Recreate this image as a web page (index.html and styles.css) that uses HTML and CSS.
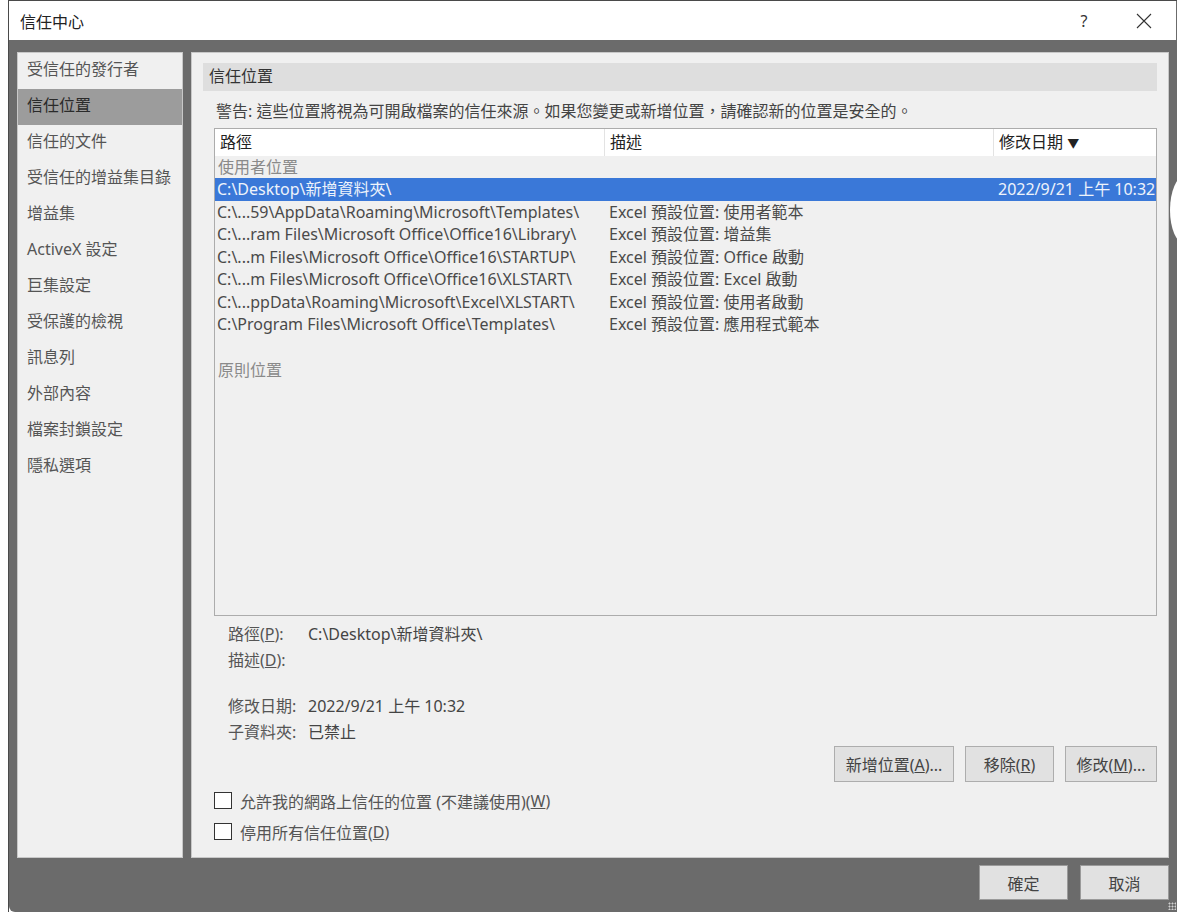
FILE: index.html
```html
<!DOCTYPE html>
<html lang="zh-Hant">
<head>
  <meta charset="UTF-8">
  <meta name="viewport" content="width=device-width, initial-scale=1.0">
  <title>信任中心</title>
  <link rel="stylesheet" href="styles.css">
</head>
<body>
  <div class="window">
    <div class="titlebar">
      <div class="title">信任中心</div>
      <div class="help">?</div>
      <div class="close">
        <svg width="16" height="16" viewBox="0 0 16 16"><path d="M1 1 L15 15 M15 1 L1 15" stroke="#333" stroke-width="1.1" fill="none"/></svg>
      </div>
    </div>

    <div class="frame">
      <div class="main">
        <ul class="nav">
          <li>受信任的發行者</li>
          <li class="active">信任位置</li>
          <li>信任的文件</li>
          <li>受信任的增益集目錄</li>
          <li>增益集</li>
          <li>ActiveX 設定</li>
          <li>巨集設定</li>
          <li>受保護的檢視</li>
          <li>訊息列</li>
          <li>外部內容</li>
          <li>檔案封鎖設定</li>
          <li>隱私選項</li>
        </ul>

        <div class="content">
          <div class="section-title">信任位置</div>
          <div class="warning">警告: 這些位置將視為可開啟檔案的信任來源。如果您變更或新增位置，請確認新的位置是安全的。</div>

          <div class="list">
            <div class="list-head">
              <div class="col col-path">路徑</div>
              <div class="col col-desc">描述</div>
              <div class="col col-date">修改日期 <span class="sort">&#9660;</span></div>
            </div>
            <div class="group">使用者位置</div>
            <div class="row selected">
              <div class="cell-path">C:\Desktop\新增資料夾\</div>
              <div class="cell-desc"></div>
              <div class="cell-date">2022/9/21 上午 10:32</div>
            </div>
            <div class="row">
              <div class="cell-path">C:\...59\AppData\Roaming\Microsoft\Templates\</div>
              <div class="cell-desc">Excel 預設位置: 使用者範本</div>
              <div class="cell-date"></div>
            </div>
            <div class="row">
              <div class="cell-path">C:\...ram Files\Microsoft Office\Office16\Library\</div>
              <div class="cell-desc">Excel 預設位置: 增益集</div>
              <div class="cell-date"></div>
            </div>
            <div class="row">
              <div class="cell-path">C:\...m Files\Microsoft Office\Office16\STARTUP\</div>
              <div class="cell-desc">Excel 預設位置: Office 啟動</div>
              <div class="cell-date"></div>
            </div>
            <div class="row">
              <div class="cell-path">C:\...m Files\Microsoft Office\Office16\XLSTART\</div>
              <div class="cell-desc">Excel 預設位置: Excel 啟動</div>
              <div class="cell-date"></div>
            </div>
            <div class="row">
              <div class="cell-path">C:\...ppData\Roaming\Microsoft\Excel\XLSTART\</div>
              <div class="cell-desc">Excel 預設位置: 使用者啟動</div>
              <div class="cell-date"></div>
            </div>
            <div class="row">
              <div class="cell-path">C:\Program Files\Microsoft Office\Templates\</div>
              <div class="cell-desc">Excel 預設位置: 應用程式範本</div>
              <div class="cell-date"></div>
            </div>
            <div class="group group-gap">原則位置</div>
          </div>

          <div class="details">
            <div class="detail"><span class="label">路徑(<u>P</u>):</span><span class="value">C:\Desktop\新增資料夾\</span></div>
            <div class="detail"><span class="label">描述(<u>D</u>):</span><span class="value"></span></div>
            <div class="detail detail-gap"><span class="label">修改日期:</span><span class="value">2022/9/21 上午 10:32</span></div>
            <div class="detail"><span class="label">子資料夾:</span><span class="value">已禁止</span></div>
          </div>

          <div class="actions">
            <button class="btn btn-add">新增位置(<u>A</u>)...</button>
            <button class="btn btn-remove">移除(<u>R</u>)</button>
            <button class="btn btn-edit">修改(<u>M</u>)...</button>
          </div>

          <label class="check"><span class="box"></span>允許我的網路上信任的位置 (不建議使用)(<u>W</u>)</label>
          <label class="check"><span class="box"></span>停用所有信任位置(<u>D</u>)</label>
        </div>
      </div>

      <div class="footer">
        <button class="btn btn-footer">確定</button>
        <button class="btn btn-footer">取消</button>
      </div>
      <div class="grip"></div>
    </div>
  </div>
  <div class="blob"></div>
</body>
</html>
```

FILE: styles.css
```css
* {
  box-sizing: border-box;
}
body {
  margin: 0;
  background-color: #fff;
  font-family: "Noto Sans", "Noto Sans CJK TC", sans-serif;
  font-size: 16px;
  color: #444;
}
.window {
  position: relative;
  width: 1169px;
  margin-left: 8px;
  border-left: 1px solid #4a4a4a;
  border-top: 1px solid #4a4a4a;
}
.titlebar {
  display: flex;
  align-items: center;
  height: 39px;
  background-color: #fff;
  border-right: 1px solid #6b6b6b;
}
.title {
  flex: 1;
  padding-left: 11px;
  font-size: 16px;
  color: #222;
}
.help {
  width: 20px;
  margin-right: 42px;
  text-align: center;
  font-size: 16px;
  color: #333;
}
.close {
  display: flex;
  width: 16px;
  height: 16px;
  margin-right: 24px;
}
.frame {
  position: relative;
  height: 872px;
  padding: 12px 8px 0 8px;
  background-color: #6b6b6b;
  border-bottom-left-radius: 6px;
}
.main {
  display: flex;
  gap: 8px;
  height: 806px;
}

/* 左侧导航 */
.nav {
  width: 166px;
  margin: 0;
  padding: 0;
  list-style: none;
  background-color: #f0f0f0;
  border: 1px solid #c8c8c8;
}
.nav li {
  height: 36px;
  line-height: 33px;
  padding-left: 9px;
  color: #555;
  white-space: nowrap;
}
.nav li.active {
  background-color: #9c9c9c;
  color: #2a2a2a;
}

/* 右侧内容 */
.content {
  flex: 1;
  padding: 10px 11px 0 11px;
  background-color: #f0f0f0;
  border: 1px solid #c8c8c8;
}
.section-title {
  height: 28px;
  line-height: 27px;
  padding-left: 6px;
  background-color: #dedede;
  color: #333;
}
.warning {
  height: 37px;
  line-height: 40px;
  padding-left: 13px;
  color: #444;
  white-space: nowrap;
}
.list {
  height: 488px;
  margin-left: 11px;
  border: 1px solid #acacac;
  background-color: #f0f0f0;
}
.list-head {
  display: flex;
  height: 27px;
  background-color: #fff;
  color: #222;
}
.list-head .col {
  line-height: 27px;
  padding-left: 5px;
}
.col-path {
  width: 390px;
  border-right: 1px solid #e3e3e3;
}
.col-desc {
  width: 389px;
  border-right: 1px solid #e3e3e3;
}
.col-date {
  flex: 1;
}
.sort {
  font-size: 12px;
}
.group {
  height: 22px;
  line-height: 22px;
  padding-left: 3px;
  color: #8a8a8a;
}
.group-gap {
  margin-top: 23px;
}
.row {
  display: flex;
  height: 22.5px;
  line-height: 22px;
  color: #4a4a4a;
  white-space: nowrap;
}
.row.selected {
  background-color: #3a78d8;
  color: #eef3fb;
}
.cell-path {
  width: 392px;
  padding-left: 2px;
  overflow: hidden;
}
.cell-desc {
  width: 389px;
  padding-left: 2px;
}
.cell-date {
  flex: 1;
  padding-left: 2px;
}

/* 详细信息 */
.details {
  padding: 5px 0 0 25px;
  height: 130px;
}
.detail {
  display: flex;
  height: 26px;
  line-height: 26px;
  color: #555;
}
.detail-gap {
  margin-top: 20px;
}
.label {
  width: 80px;
}
.value {
  color: #444;
}

.actions {
  display: flex;
  justify-content: flex-end;
  gap: 11px;
  height: 36px;
}
.btn {
  height: 36px;
  padding: 0;
  background-color: #e1e1e1;
  border: 1px solid #adadad;
  font-family: "Noto Sans", "Noto Sans CJK TC", sans-serif;
  font-size: 16px;
  color: #444;
}
.btn-add {
  width: 120px;
}
.btn-remove {
  width: 89px;
}
.btn-edit {
  width: 92px;
}

.check {
  display: flex;
  align-items: center;
  height: 31px;
  margin-left: 11px;
  color: #555;
}
.check:first-of-type {
  margin-top: 3px;
}
.box {
  width: 18px;
  height: 17px;
  margin-right: 8px;
  background-color: #fff;
  border: 1px solid #333;
}

/* 底部按钮 */
.footer {
  display: flex;
  justify-content: flex-end;
  gap: 12px;
  padding-top: 7px;
}
.btn-footer {
  width: 89px;
  height: 35px;
  border-color: #9a9a9a;
}
.grip {
  position: absolute;
  right: 1px;
  bottom: 2px;
  width: 8px;
  height: 8px;
  background-image: radial-gradient(circle, #d0d0d0 0.8px, transparent 1.2px);
  background-size: 3px 3px;
}
.blob {
  position: absolute;
  left: 1170px;
  top: 176px;
  width: 30px;
  height: 68px;
  border-radius: 50%;
  background-color: #fff;
}
```
